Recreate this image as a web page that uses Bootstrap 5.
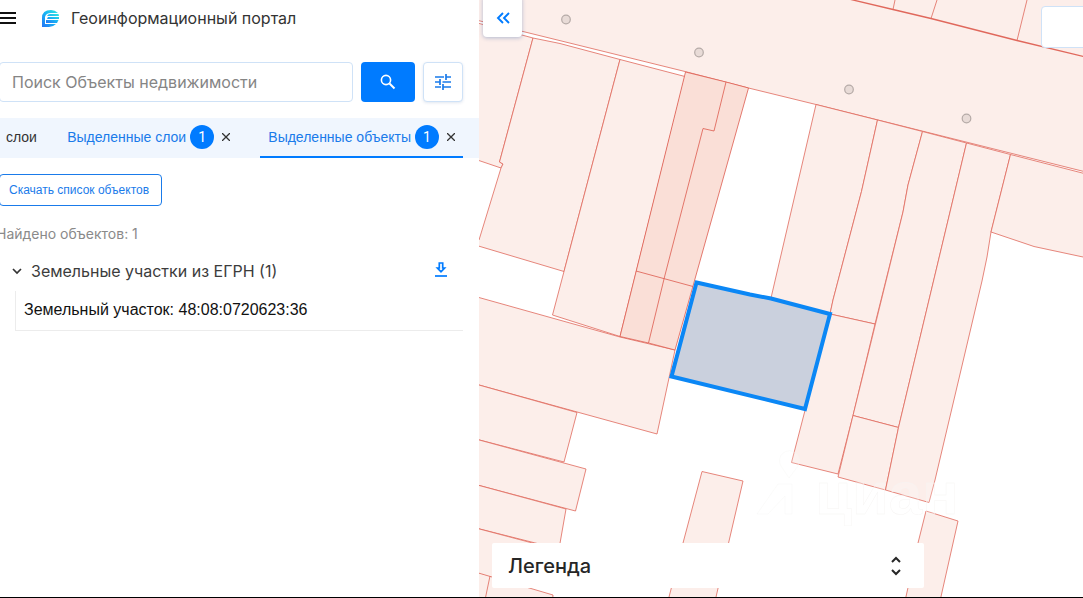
<!DOCTYPE html>
<html lang="ru">
<head>
<meta charset="utf-8">
<meta name="viewport" content="width=device-width, initial-scale=1">
<title>Геоинформационный портал</title>
<link href="https://cdn.jsdelivr.net/npm/bootstrap@5.3.0/dist/css/bootstrap.min.css" rel="stylesheet">
<style>
  :root { --accent: #007bff; --line: #cfe2f7; }
  body { font-family: Inter, "Liberation Sans", sans-serif; color: #333; background: #fff; }
  .app-shell { border-bottom: 1px solid #000; }
  .side-panel { flex: 0 0 479px; max-width: 50%; }
  .app-header { height: 36px; gap: 24px; }
  .brand { gap: 11px; }
  .app-title { font-size: 16px; line-height: 24px; color: #333; }
  .panel-body { margin-left: -8px; padding-left: 7px; padding-right: 16px; }
  .search-row { margin-top: 26px; gap: 8px; }
  .search-row .form-control { height: 40px; border-color: var(--line); border-radius: 4px; font-size: 16px; }
  .search-row .form-control::placeholder { color: #858585; opacity: 1; }
  .search-btn { width: 54px; height: 40px; border-radius: 4px; background: var(--accent); }
  .search-btn svg, .filter-btn svg { display: block; margin: 0 auto; }
  .filter-btn { width: 40px; height: 40px; border: 1px solid var(--line); border-radius: 4px; background: #fff; box-shadow: 0 1px 3px rgba(0, 60, 130, .12); }
  .tab-strip { margin-top: 16px; height: 40px; padding-left: 6px; padding-right: 16px; background: #f0f6fe; font-family: "Liberation Sans", Arial, sans-serif; font-size: 14px; line-height: 20px; }
  .tab-item { height: 40px; border-bottom: 2px solid transparent; }
  .tab-item.is-active { border-color: var(--accent); }
  .tab-item a { color: #1a7bea; text-decoration: none; }
  .tab-item a.plain { color: #333; }
  .count-dot { width: 24px; height: 24px; border-radius: 50%; background: var(--accent); color: #fff; font-family: Roboto, sans-serif; font-size: 14px; }
  .bare-btn { border: 0; padding: 0; background: none; line-height: 0; color: #333; }
  .download-btn { height: 32px; margin-top: 16px; padding: 0 12px 0 9px; border: 1px solid #1a7bea; border-radius: 4px; background: #fff; color: #1a7bea; font-family: "Liberation Sans", Arial, sans-serif; font-size: 12px; line-height: 16px; }
  .found-note { margin-top: 18px; font-size: 14px; line-height: 20px; color: #8a8a8a; margin-left: -3px; }
  .group-row { margin-top: 15px; height: 24px; padding-left: 12px; padding-right: 15px; }
  .group-title { font-size: 16px; line-height: 24px; margin-left: 8px; color: #3c3c3c; }
  .object-row { display: block; margin: 8px 0 0 16px; height: 40px; padding: 7px 8px; border-left: 1px solid #ececec; border-bottom: 1px solid #ececec; font-family: "Liberation Sans", Arial, sans-serif; font-size: 16px; line-height: 24px; color: #111; text-decoration: none; }
  .map-pane svg.map-canvas { width: 100%; height: 100%; }
  .parcel { fill: #fceeea; stroke: #e0685c; stroke-width: .8; }
  .parcel-dark { fill: #fadfd7; stroke: #dd5a4e; }
  .parcel-picked { fill: #cad0dd; stroke: #0b87f5; stroke-width: 4; }
  .map-pin circle { fill: #e8dbd7; stroke: #b5aaa7; stroke-width: 1.2; }
  .watermark { fill: #fff; fill-opacity: .2; stroke: #f6f4f3; stroke-width: .4; font: bold 60px "Liberation Sans", sans-serif; }
  .collapse-btn { left: 4px; top: -4px; width: 39px; height: 41px; border: 0; border-radius: 4px; background: #fff; color: var(--accent); box-shadow: 0 1px 4px rgba(0, 60, 150, .3); }
  .map-field { right: -8px; top: 6px; width: 50px; height: 42px; border: 1px solid var(--line); border-radius: 4px; background: #fff; }
  .legend-bar { left: 13px; bottom: 9px; width: 432px; max-width: 95%; height: 45px; padding: 0 20px 0 16px; border: 0; border-radius: 2px; background: #fff; color: #262626; font-size: 20px; line-height: 24px; font-weight: 500; }
</style>
</head>
<body>
<div class="app-shell d-flex vh-100 overflow-hidden">
  <aside class="side-panel overflow-hidden">
    <header class="app-header d-flex align-items-center">
      <button class="bare-btn" type="button" aria-label="Меню">
        <svg width="17" height="14" viewBox="0 0 17 14"><path d="M0 2h16M0 7h16M0 12h16" stroke="#111" stroke-width="2"/></svg>
      </button>
      <div class="brand d-flex align-items-center">
        <svg width="19" height="19" viewBox="0 0 19 19">
          <defs><linearGradient id="logoTone" x1="1" y1="0" x2="0" y2="1"><stop offset="0" stop-color="#32e6e0"/><stop offset=".5" stop-color="#18b4f4"/><stop offset="1" stop-color="#2473f5"/></linearGradient></defs>
          <path d="M1 18V9Q1 1 10 1Q14 1 17 4H10Q5 4 4 8V15H15Q12 18 8 18Z" fill="url(#logoTone)"/>
          <path d="M6 7Q7 5 9 5H17.500L18 7ZM6 10L7 8H18V10ZM5 14V11H17.500L16 14Z" fill="url(#logoTone)"/>
        </svg>
        <span class="app-title text-nowrap">Геоинформационный портал</span>
      </div>
    </header>

    <div class="panel-body">
      <form class="search-row d-flex">
        <input class="form-control" type="search" placeholder="Поиск Объекты недвижимости" aria-label="Поиск Объекты недвижимости">
        <button class="btn search-btn p-0 flex-shrink-0" type="button" aria-label="Найти">
          <svg width="18" height="18" viewBox="0 0 18 18" fill="none" stroke="#fff"><circle cx="7" cy="7" r="4.600" stroke-width="1.600"/><path d="M10.500 10.500L15.500 15.500" stroke-width="2"/></svg>
        </button>
        <button class="btn filter-btn p-0 flex-shrink-0" type="button" aria-label="Фильтры">
          <svg width="18" height="18" viewBox="0 0 18 18" stroke="#1a7bea" stroke-width="1.700"><path d="M1 4h9M12 4h5M12 1v6M1 9h5M8.500 9H17M6 6v6M1 14h6M9 14h8M9 11v6"/></svg>
        </button>
      </form>
    </div>

    <nav class="tab-strip d-flex justify-content-between text-nowrap">
      <div class="tab-item d-flex align-items-center"><a class="plain" href="#">слои</a></div>
      <div class="tab-item d-flex align-items-center px-2">
        <a href="#">Выделенные слои</a><span class="count-dot d-flex align-items-center justify-content-center ms-1">1</span>
        <button class="bare-btn ms-2" type="button" aria-label="Закрыть"><svg width="8" height="8" viewBox="0 0 8 8"><path d="M0 0L8 8M8 0L0 8" stroke="currentColor" stroke-width="1.300"/></svg></button>
      </div>
      <div class="tab-item is-active d-flex align-items-center ps-2 pe-2">
        <a href="#">Выделенные объекты</a><span class="count-dot d-flex align-items-center justify-content-center ms-1">1</span>
        <button class="bare-btn ms-2" type="button" aria-label="Закрыть"><svg width="8" height="8" viewBox="0 0 8 8"><path d="M0 0L8 8M8 0L0 8" stroke="currentColor" stroke-width="1.300"/></svg></button>
      </div>
    </nav>

    <div class="panel-body">
      <button class="download-btn" type="button">Скачать список объектов</button>
      <p class="found-note mb-0">Найдено объектов: 1</p>
      <div class="group-row d-flex align-items-center">
        <button class="bare-btn" type="button" aria-label="Свернуть группу"><svg width="12" height="8" viewBox="0 0 12 8"><path d="M2 2L6 6L10 2" fill="none" stroke="currentColor" stroke-width="1.700"/></svg></button>
        <span class="group-title">Земельные участки из ЕГРН (1)</span>
        <button class="bare-btn ms-auto" type="button" aria-label="Скачать"><svg width="14" height="18" viewBox="0 0 14 18" fill="none" stroke="#007bff" stroke-width="1.700"><path d="M5.300 1H8.700V6H10.600L7 9.800L3.400 6H5.300Z"/><path d="M1 14H13"/></svg></button>
      </div>
      <a class="object-row" href="#">Земельный участок: 48:08:0720623:36</a>
    </div>
  </aside>

  <main class="map-pane position-relative flex-grow-1 overflow-hidden">
    <svg class="map-canvas d-block" viewBox="479 0 604 597" preserveAspectRatio="xMaxYMin slice" role="img" aria-label="Карта участков">
      <g class="parcel">
        <path d="M470 -5H1090V173L816 104.500L748.500 88L685 71.500L523 31.500L470 18.500Z"/>
        <path d="M832 -5L893 9.500L931 18.500L1017 40.500L1090 58" fill="none" stroke-width="1.300"/>
        <path d="M895 0L893 9.500M937 0L931 18.500M1027 0L1017 40.500"/>
        <path d="M470 21L533 38L499.500 162L503 164L501 168L470 157.500Z"/>
        <path d="M533 38L560 43.500L620 59.500L564 271.500L470 243.500L479 240L501 168L503 164L499.500 162Z"/>
        <path d="M620 59.500L685 76.500L620 336.500L552.500 315Z"/>
        <path d="M470 295L620 337L675 350L657 434L470 382.500Z"/>
        <path d="M470 382.500L577 412.500L564 462L470 437.500Z"/>
        <path d="M470 437.500L586 469L575.500 511L470 483Z"/>
        <path d="M470 483L566 509L559 549L470 526.500Z"/>
        <path d="M470 526.500L540 545L525 588L470 571Z"/>
        <path d="M470 570.500L553 595L552 610H470ZM490 576L485 600"/>
        <path d="M702 471.500L743 481L716 597L715 610H665L669 597L683 543Z"/>
        <path d="M926 511L958 521L938 610H903L918 543Z"/>
        <path d="M816 104.500L877.500 120L861.500 191.500L833 300L830 314L771 298Z"/>
        <path d="M877.500 120L922.500 131.500L908 185L903 212L875 324L830 314L833 300L861.500 191.500Z"/>
        <path d="M830 314L875 324L853 415.500L838 474L791.500 462.500Z"/>
        <path d="M922.500 131.500L966.500 143L929 300L898.500 427.500L853 415.500L903 212L908 185Z"/>
        <path d="M853 415.500L898.500 427.500L885.500 490L838 477Z"/>
        <path d="M966.500 143L1010.500 154.500L991 232L987 257L982 281L935 480L929 502.500L885.500 490L898.500 427.500L929 300Z"/>
        <path d="M1010.500 154.500L1090 175V258.500L1034 246.500L991 232Z"/>
      </g>
      <g class="parcel parcel-dark">
        <path d="M685.500 72L726 82L748.500 88L693 286L675 350L648.500 343L620 336.500Z"/>
        <path d="M726 82L714 131L703 128.500L664.500 277L648.500 343M636 271L693 286.500" fill="none"/>
      </g>
      <path class="parcel-picked" d="M696.500 282.500L750 294.500L771 298.500L830 314L805 409L671.500 376.500Z"/>
      <g class="map-pin">
        <circle cx="566" cy="19.500" r="4.300"/><circle cx="699" cy="52.500" r="4.300"/><circle cx="849" cy="89.500" r="4.300"/><circle cx="966.500" cy="118.500" r="4.300"/>
      </g>
      <g class="watermark">
        <path d="M757 514L778 484H792V514H785V496L768 514ZM781 466a10 10 0 1 1 17 0L789 478Z"/>
        <text x="815" y="514">циан</text>
      </g>
    </svg>
    <button class="collapse-btn position-absolute p-0" type="button" aria-label="Свернуть панель">
      <svg width="14" height="14" viewBox="0 0 14 14" fill="none" stroke="currentColor" stroke-width="1.900"><path d="M7 2L2 7L7 12M13 2L8 7L13 12"/></svg>
    </button>
    <div class="map-field position-absolute"></div>
    <button class="legend-bar position-absolute d-flex align-items-center justify-content-between" type="button">
      <span>Легенда</span>
      <svg width="16" height="22" viewBox="0 0 16 22" fill="none" stroke="currentColor" stroke-width="2"><path d="M4 7L8 3L12 7M4 15L8 19L12 15"/></svg>
    </button>
  </main>
</div>
<script src="https://cdn.jsdelivr.net/npm/bootstrap@5.3.0/dist/js/bootstrap.bundle.min.js"></script>
</body>
</html>
